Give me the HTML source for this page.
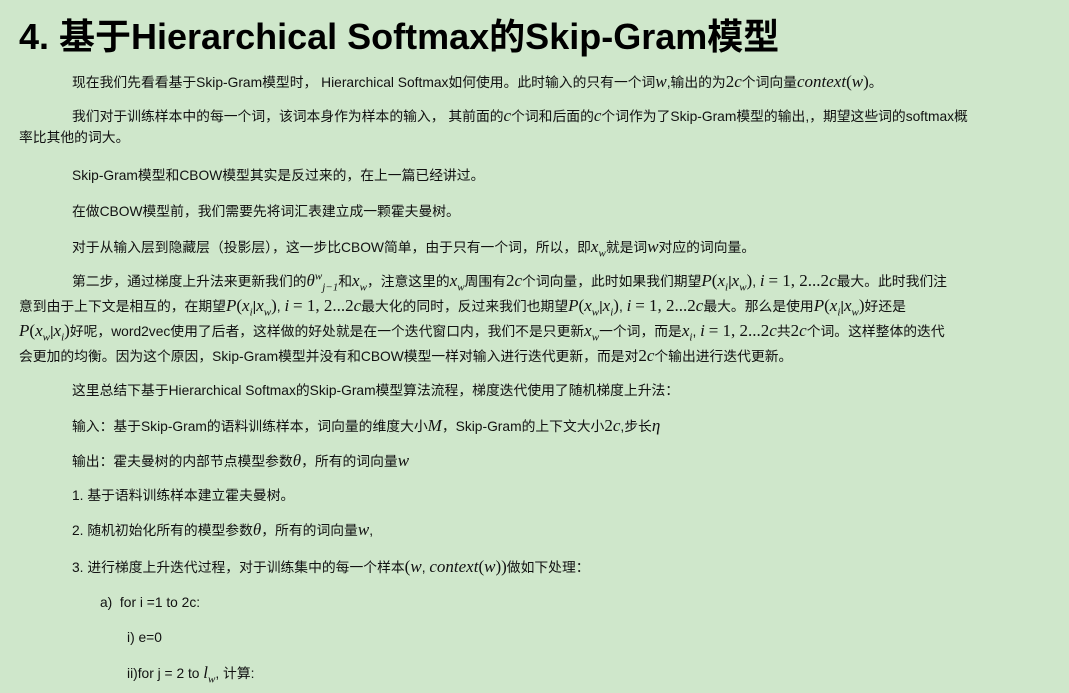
<!DOCTYPE html>
<html><head><meta charset="utf-8"><style>
body{margin:0;background:#cfe7cb;width:1069px;height:693px;overflow:hidden;font-family:"Liberation Sans","Noto Sans CJK SC",sans-serif;color:#111;font-size:13.8px}
h1{position:absolute;left:19px;top:14px;margin:0;font-size:36px;font-weight:bold;line-height:46px;white-space:nowrap;color:#000}
.l{position:absolute;white-space:nowrap;line-height:20px}
i.m{font-family:"Liberation Serif",serif;font-size:17px;font-style:italic}
.n{font-family:"Liberation Serif",serif;font-size:17px}
sub,sup{font-size:11px;line-height:0}
</style></head><body>
<h1>4. 基于Hierarchical Softmax的Skip-Gram模型</h1>
<div class="l" style="left:72px;top:72px">现在我们先看看基于Skip-Gram模型时， Hierarchical Softmax如何使用。此时输入的只有一个词<i class="m">w</i>,输出的为<span class="n">2</span><i class="m">c</i>个词向量<i class="m">context</i><span class="n">(</span><i class="m">w</i><span class="n">)</span>。</div>
<div class="l" style="left:72px;top:106px">我们对于训练样本中的每一个词，该词本身作为样本的输入， 其前面的<i class="m">c</i>个词和后面的<i class="m">c</i>个词作为了Skip-Gram模型的输出,，期望这些词的softmax概</div>
<div class="l" style="left:19px;top:128px">率比其他的词大。</div>
<div class="l" style="left:72px;top:166px">Skip-Gram模型和CBOW模型其实是反过来的，在上一篇已经讲过。</div>
<div class="l" style="left:72px;top:202px">在做CBOW模型前，我们需要先将词汇表建立成一颗霍夫曼树。</div>
<div class="l" style="left:72px;top:237px">对于从输入层到隐藏层（投影层），这一步比CBOW简单，由于只有一个词，所以，即<i class="m">x<sub>w</sub></i>就是词<i class="m">w</i>对应的词向量。</div>
<div class="l" style="left:72px;top:271px">第二步，通过梯度上升法来更新我们的<i class="m">θ<sup>w</sup><sub>j−1</sub></i>和<i class="m">x<sub>w</sub></i>，注意这里的<i class="m">x<sub>w</sub></i>周围有<span class="n">2</span><i class="m">c</i>个词向量，此时如果我们期望<i class="m">P</i><span class="n">(</span><i class="m">x<sub>i</sub></i>|<i class="m">x<sub>w</sub></i><span class="n">)</span>, <i class="m">i</i> <span class="n">= 1, 2...2</span><i class="m">c</i>最大。此时我们注</div>
<div class="l" style="left:19px;top:296px">意到由于上下文是相互的，在期望<i class="m">P</i><span class="n">(</span><i class="m">x<sub>i</sub></i>|<i class="m">x<sub>w</sub></i><span class="n">)</span>, <i class="m">i</i> <span class="n">= 1, 2...2</span><i class="m">c</i>最大化的同时，反过来我们也期望<i class="m">P</i><span class="n">(</span><i class="m">x<sub>w</sub></i>|<i class="m">x<sub>i</sub></i><span class="n">)</span>, <i class="m">i</i> <span class="n">= 1, 2...2</span><i class="m">c</i>最大。那么是使用<i class="m">P</i><span class="n">(</span><i class="m">x<sub>i</sub></i>|<i class="m">x<sub>w</sub></i><span class="n">)</span>好还是</div>
<div class="l" style="left:19px;top:321px"><i class="m">P</i><span class="n">(</span><i class="m">x<sub>w</sub></i>|<i class="m">x<sub>i</sub></i><span class="n">)</span>好呢，word2vec使用了后者，这样做的好处就是在一个迭代窗口内，我们不是只更新<i class="m">x<sub>w</sub></i>一个词，而是<i class="m">x<sub>i</sub></i>, <i class="m">i</i> <span class="n">= 1, 2...2</span><i class="m">c</i>共<span class="n">2</span><i class="m">c</i>个词。这样整体的迭代</div>
<div class="l" style="left:19px;top:346px">会更加的均衡。因为这个原因，Skip-Gram模型并没有和CBOW模型一样对输入进行迭代更新，而是对<span class="n">2</span><i class="m">c</i>个输出进行迭代更新。</div>
<div class="l" style="left:72px;top:381px">这里总结下基于Hierarchical Softmax的Skip-Gram模型算法流程，梯度迭代使用了随机梯度上升法：</div>
<div class="l" style="left:72px;top:416px">输入：基于Skip-Gram的语料训练样本，词向量的维度大小<i class="m">M</i>，Skip-Gram的上下文大小<span class="n">2</span><i class="m">c</i>,步长<i class="m">η</i></div>
<div class="l" style="left:72px;top:451px">输出：霍夫曼树的内部节点模型参数<i class="m">θ</i>，所有的词向量<i class="m">w</i></div>
<div class="l" style="left:72px;top:486px">1. 基于语料训练样本建立霍夫曼树。</div>
<div class="l" style="left:72px;top:520px">2. 随机初始化所有的模型参数<i class="m">θ</i>，所有的词向量<i class="m">w</i>,</div>
<div class="l" style="left:72px;top:557px">3. 进行梯度上升迭代过程，对于训练集中的每一个样本<span class="n">(</span><i class="m">w</i>, <i class="m">context</i><span class="n">(</span><i class="m">w</i><span class="n">))</span>做如下处理：</div>
<div class="l" style="left:100px;top:593px">a)&nbsp; for i =1 to 2c:</div>
<div class="l" style="left:127px;top:628px">i) e=0</div>
<div class="l" style="left:127px;top:663px">ii)for j = 2 to <i class="m">l<sub>w</sub></i>, 计算:</div>
</body></html>
